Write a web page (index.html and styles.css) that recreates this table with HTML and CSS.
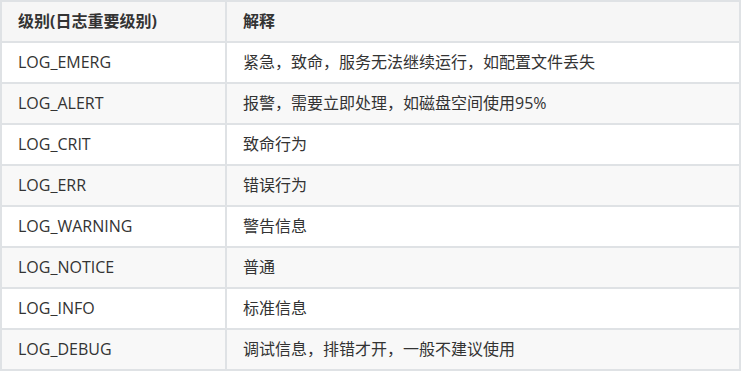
FILE: index.html
```html
<!DOCTYPE html>
<html lang="zh">
<head>
<meta charset="utf-8">
<link rel="stylesheet" href="styles.css">
</head>
<body>
<table class="log-table">
  <thead>
    <tr><th class="c1">级别(日志重要级别)</th><th>解释</th></tr>
  </thead>
  <tbody>
    <tr><td>LOG_EMERG</td><td>紧急，致命，服务无法继续运行，如配置文件丢失</td></tr>
    <tr><td>LOG_ALERT</td><td>报警，需要立即处理，如磁盘空间使用95%</td></tr>
    <tr><td>LOG_CRIT</td><td>致命行为</td></tr>
    <tr><td>LOG_ERR</td><td>错误行为</td></tr>
    <tr><td>LOG_WARNING</td><td>警告信息</td></tr>
    <tr><td>LOG_NOTICE</td><td>普通</td></tr>
    <tr><td>LOG_INFO</td><td>标准信息</td></tr>
    <tr><td>LOG_DEBUG</td><td>调试信息，排错才开，一般不建议使用</td></tr>
  </tbody>
</table>
</body>
</html>
```
FILE: styles.css
```css
html, body {
  margin: 0;
  padding: 0;
  background: #ffffff;
}
.log-table {
  border-collapse: collapse;
  width: 741px;
  font-family: "Open Sans", "Noto Sans CJK SC", sans-serif;
  font-size: 16px;
  color: #333333;
}
.log-table th,
.log-table td {
  border: 2px solid #dfe2e5;
  padding: 7px 16px 8px;
  line-height: 24px;
  text-align: left;
  height: 24px;
}
.log-table th {
  font-weight: bold;
  background: #f6f6f6;
}
.log-table th.c1 {
  width: 191px;
}
.log-table tbody tr:nth-child(even) {
  background: #f8f8f8;
}
```
